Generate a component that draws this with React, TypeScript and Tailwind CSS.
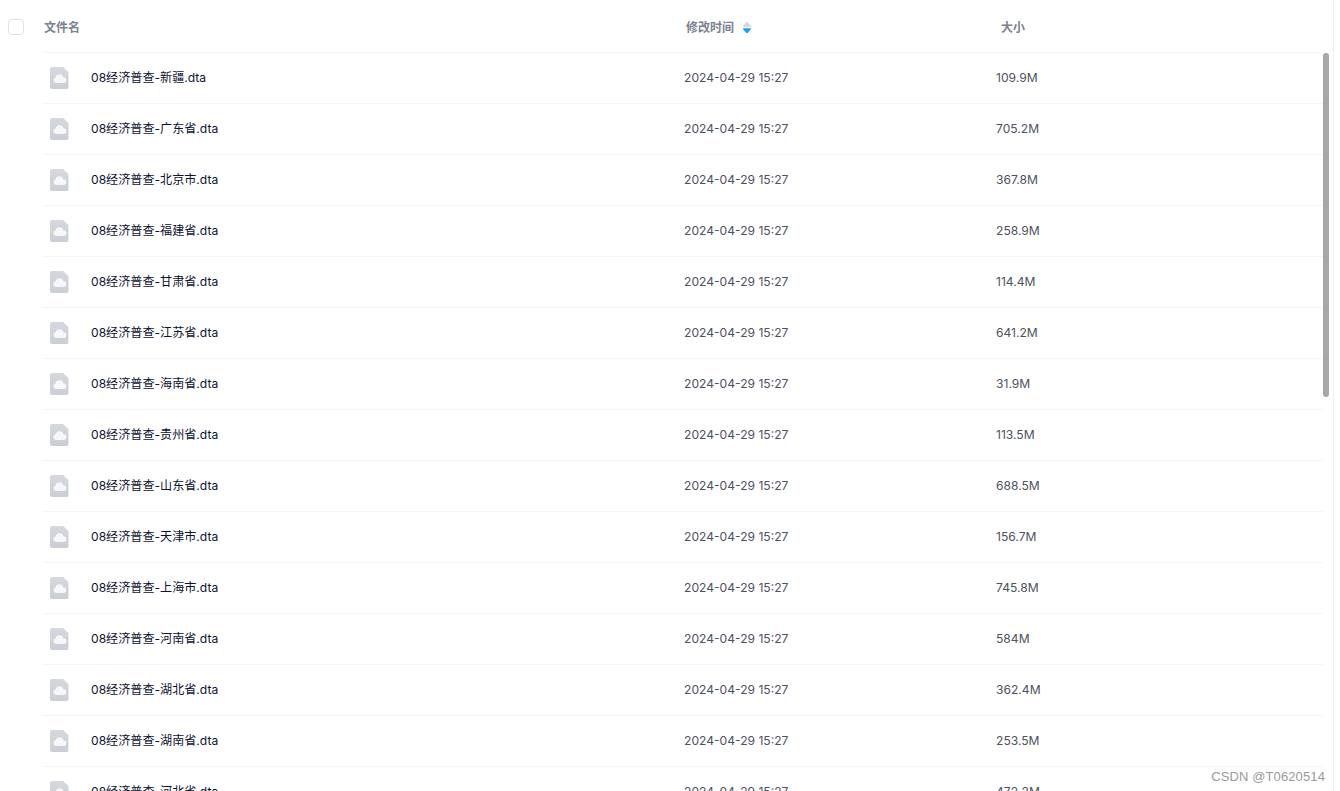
const rows = [
  ["新疆", "109.9M"], ["广东省", "705.2M"], ["北京市", "367.8M"], ["福建省", "258.9M"], ["甘肃省", "114.4M"],
  ["江苏省", "641.2M"], ["海南省", "31.9M"], ["贵州省", "113.5M"], ["山东省", "688.5M"], ["天津市", "156.7M"],
  ["上海市", "745.8M"], ["河南省", "584M"], ["湖北省", "362.4M"], ["湖南省", "253.5M"], ["河北省", "472.2M"],
];

function FileIcon() {
  return (
    <svg width="19" height="22" viewBox="0 0 19 22" className="ml-px shrink-0">
      <defs>
        <linearGradient id="fileFill" x1="0" y1="0" x2="0" y2="1">
          <stop offset="0" stopColor="#d6d8de" />
          <stop offset="1" stopColor="#cbced6" />
        </linearGradient>
      </defs>
      <path d="M2 0H13.2L18.5 5.3V20a2 2 0 0 1-2 2H2a2 2 0 0 1-2-2V2A2 2 0 0 1 2 0Z" fill="url(#fileFill)" />
      <path d="M6 16a2.8 2.8 0 0 1-.5-5.5 4.1 4.1 0 0 1 7.9-.3 2.9 2.9 0 0 1 .1 5.8Z" fill="#f6f7f9" />
    </svg>
  );
}

function SortIcon() {
  return (
    <svg width="10" height="13" viewBox="0 0 10 13" className="ml-[8px]">
      <path d="M5 1.5L8.2 5.2H1.8Z" fill="#d5d8e2" stroke="#d5d8e2" strokeWidth="1.6" strokeLinejoin="round" />
      <path d="M5 11.5L8.2 8H1.8Z" fill="#1e9fff" stroke="#1e9fff" strokeWidth="1.6" strokeLinejoin="round" />
    </svg>
  );
}

export default function App() {
  return (
    <div
      className="relative h-[791px] w-[1340px] overflow-hidden bg-white"
      style={{ fontFamily: 'Inter, "Noto Sans CJK SC", sans-serif' }}
    >
      <div className="h-full w-[1334px] border-r border-[#f0f0f0]">
        <div className="flex h-[53px] items-center">
          <div className="ml-2 mr-[20px] h-4 w-4 rounded-[4px] border border-[#dfe1e8] bg-white" />
          <div className="flex h-full flex-1 items-center border-b border-[#f5f5f6] pt-[3px] text-xs font-semibold text-[#7b8190]">
            <div className="w-[641px]">文件名</div>
            <div className="flex w-[315px] items-center pl-[1px]">
              修改时间
              <SortIcon />
            </div>
            <div className="pl-px">大小</div>
          </div>
          <div className="w-[10px]" />
        </div>
        <div className="flex">
          <div className="ml-[43px] w-[1280px]">
            {rows.map(([name, size]) => (
              <div key={name} className="flex h-[51px] items-center border-b border-[#f5f5f6] text-[12.1px]">
                <div className="flex w-[641px] items-center pl-[6px]">
                  <FileIcon />
                  <span className="ml-[22px] text-[#0d1230]">08经济普查-{name}.dta</span>
                </div>
                <div className="w-[312px] text-[#4d5160]">2024-04-29 15:27</div>
                <div className="text-[#4d5160]">{size}</div>
              </div>
            ))}
          </div>
          <div className="h-[344px] w-[6px] rounded-[3px] bg-[#a8a8a8]" />
        </div>
      </div>
      <div
        className="absolute right-[15px] top-[769px] text-[13px] leading-4 tracking-[0.12px] text-[#9a9a9a]"
        style={{ fontFamily: '"Liberation Sans", sans-serif' }}
      >
        CSDN @T0620514
      </div>
    </div>
  );
}
